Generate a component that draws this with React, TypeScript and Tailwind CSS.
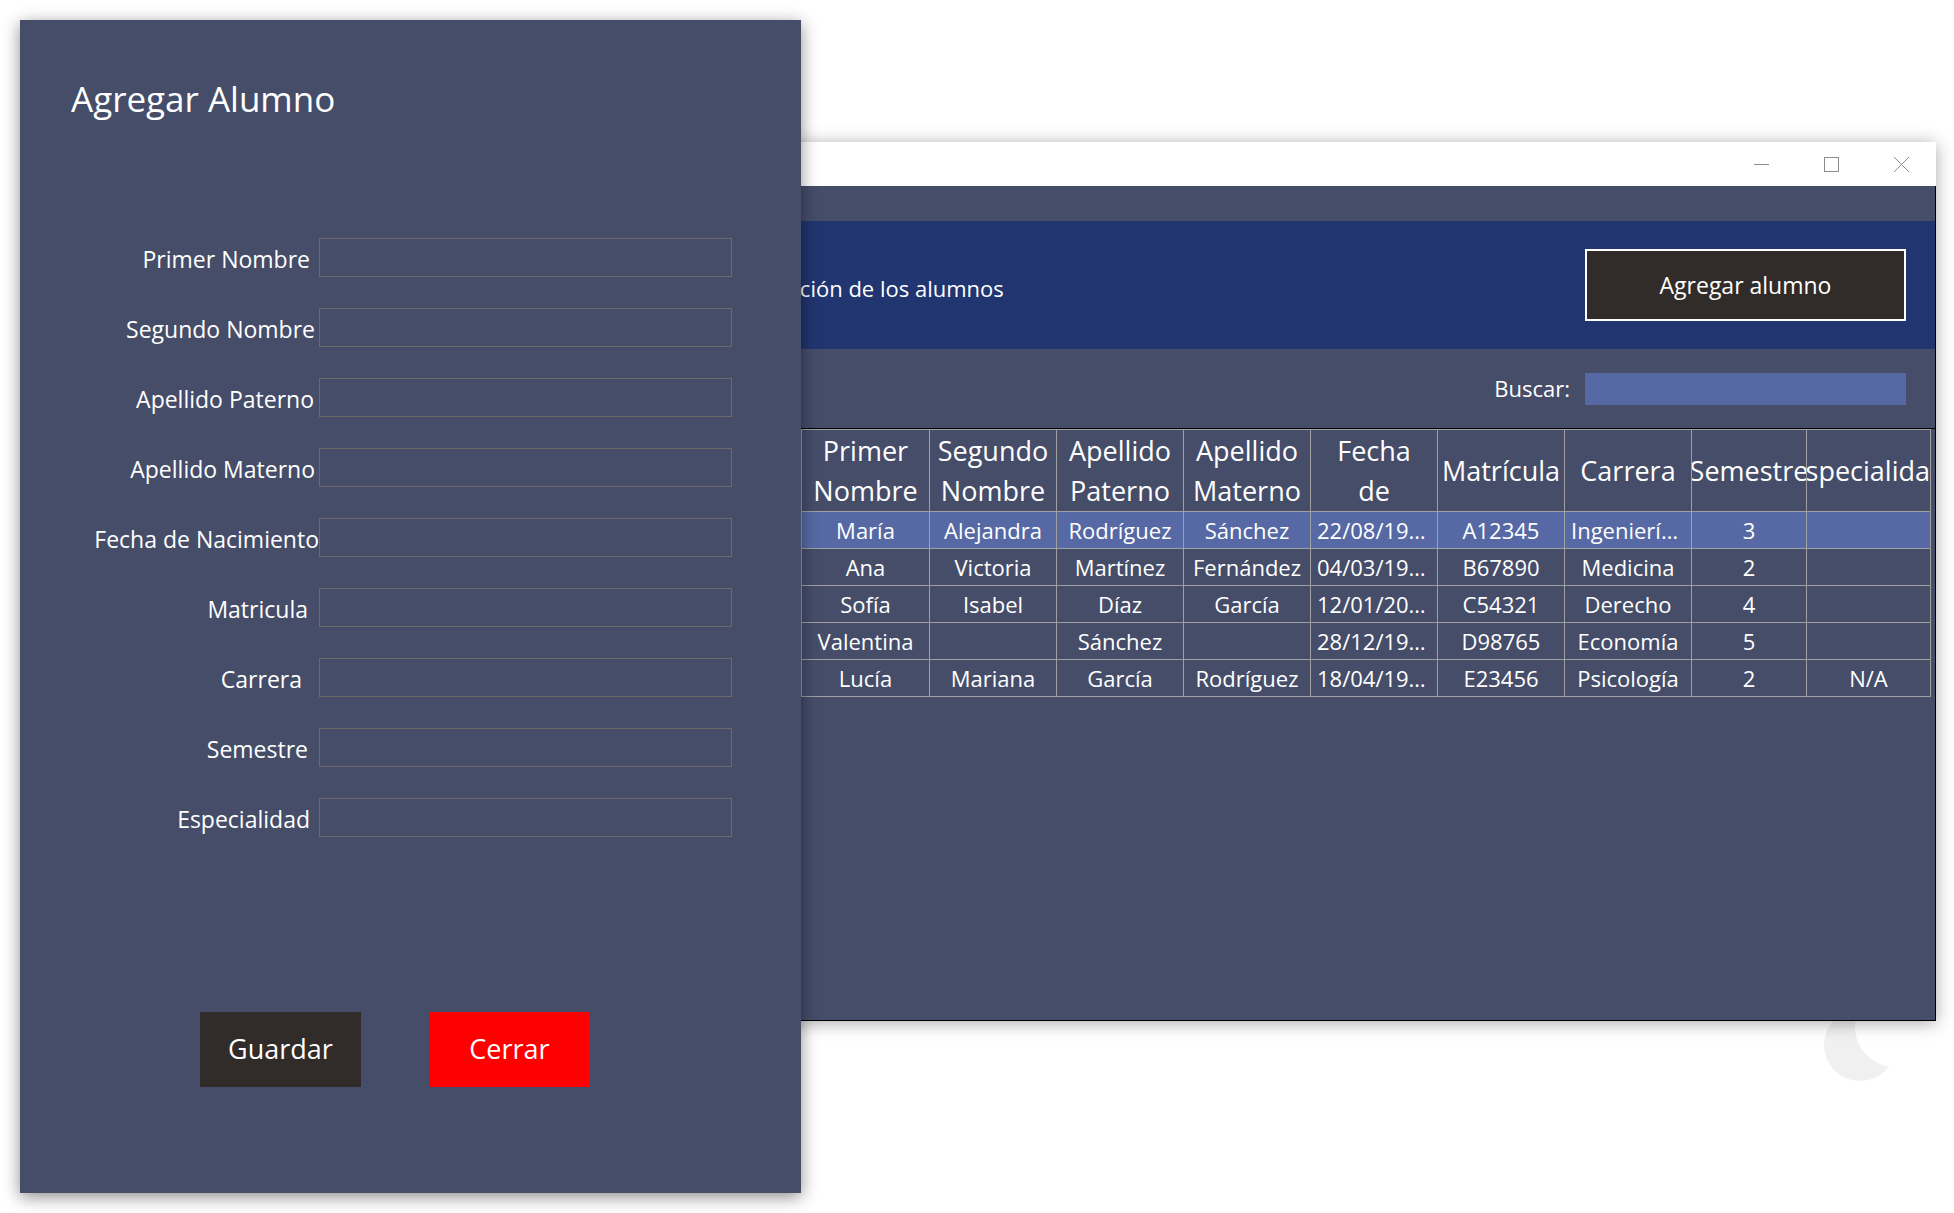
import React from "react";

const fields = [
  { label: "Primer Nombre", pr: "pr-[9px]" },
  { label: "Segundo Nombre", pr: "pr-[4px]" },
  { label: "Apellido Paterno", pr: "pr-[5px]" },
  { label: "Apellido Materno", pr: "pr-[4px]" },
  { label: "Fecha de Nacimiento", pr: "pr-0" },
  { label: "Matricula", pr: "pr-[11px]" },
  { label: "Carrera", pr: "pr-[17px]" },
  { label: "Semestre", pr: "pr-[11px]" },
  { label: "Especialidad", pr: "pr-[9px]" },
];

const alumnos = [
  ["María", "Alejandra", "Rodríguez", "Sánchez", "22/08/1999", "A12345", "Ingeniería en Sistemas", "3", ""],
  ["Ana", "Victoria", "Martínez", "Fernández", "04/03/1998", "B67890", "Medicina", "2", ""],
  ["Sofía", "Isabel", "Díaz", "García", "12/01/2000", "C54321", "Derecho", "4", ""],
  ["Valentina", "", "Sánchez", "", "28/12/1997", "D98765", "Economía", "5", ""],
  ["Lucía", "Mariana", "García", "Rodríguez", "18/04/1999", "E23456", "Psicología", "2", "N/A"],
];

const headers = [
  "Primer Nombre",
  "Segundo Nombre",
  "Apellido Paterno",
  "Apellido Materno",
  "Fecha de Nacimiento",
  "Matrícula",
  "Carrera",
  "Semestre",
  "Especialidad",
];

const CaptionButtons = () => (
  <div className="flex h-full">
    <div className="flex w-[70px] items-center justify-center">
      <svg width="15" height="15" viewBox="0 0 15 15">
        <line x1="0" y1="7.5" x2="15" y2="7.5" stroke="#8c8c8c" strokeWidth="1" />
      </svg>
    </div>
    <div className="flex w-[70px] items-center justify-center">
      <svg width="15" height="15" viewBox="0 0 15 15">
        <rect x="0.5" y="0.5" width="14" height="14" fill="none" stroke="#8c8c8c" strokeWidth="1" />
      </svg>
    </div>
    <div className="flex w-[70px] items-center justify-center">
      <svg width="15" height="15" viewBox="0 0 15 15">
        <path d="M0 0 L15 15 M15 0 L0 15" stroke="#8c8c8c" strokeWidth="1" />
      </svg>
    </div>
  </div>
);

const AlumnosTable = () => (
  <div className="ml-[101px] mt-[23px] border-t border-black">
    <div className="grid w-fit grid-cols-[128px_127px_127px_127px_127px_127px_127px_115px_124px] border-l border-t border-[#a0a0a0]">
      {headers.map((h) =>
        h === "Fecha de Nacimiento" ? (
          <div
            key={h}
            className="flex h-[82px] items-start justify-center overflow-hidden border-b border-r border-[#a0a0a0] pt-[1px] text-[27px] leading-[40px]"
          >
            <span className="text-center">
              Fecha
              <br />
              de
              <br />
              Nacimiento
            </span>
          </div>
        ) : (
          <div
            key={h}
            className="flex h-[82px] items-center justify-center overflow-hidden border-b border-r border-[#a0a0a0] text-[27px] leading-[40px]"
          >
            <span className="text-center">{h}</span>
          </div>
        )
      )}
      {alumnos.map((row, i) =>
        row.map((cell, j) => (
          <div
            key={i + "-" + j}
            className={
              i === 0
                ? "h-[37px] truncate border-b border-r border-[#a0a0a0] bg-[#5669a5] px-[6px] text-center text-[22px] leading-[36px]"
                : "h-[37px] truncate border-b border-r border-[#a0a0a0] px-[6px] text-center text-[22px] leading-[36px]"
            }
          >
            {cell}
          </div>
        ))
      )}
    </div>
  </div>
);

const MainWindow = () => (
  <div className="absolute left-[700px] top-[142px] flex w-[1236px] flex-col shadow-[0_2px_16px_rgba(0,0,0,0.35)]">
    <div className="flex h-[44px] justify-end bg-white">
      <CaptionButtons />
    </div>
    <div className="flex h-[835px] flex-col border-b border-r border-black bg-[#454d69]">
      <div className="mt-[35px] flex h-[128px] items-center justify-between bg-[#213570] pl-[18px] pr-[29px]">
        <span className="pt-[6px] text-[22px]">Información de los alumnos</span>
        <button className="flex h-[72px] w-[321px] items-center justify-center border-2 border-white bg-[#312c29] text-[23px]">
          Agregar alumno
        </button>
      </div>
      <div className="mt-[23px] flex items-center justify-end pr-[29px]">
        <span className="mr-[15px] text-[22px]">Buscar:</span>
        <div className="h-[32px] w-[321px] bg-[#5669a5]" />
      </div>
      <AlumnosTable />
    </div>
  </div>
);

const AddDialog = () => (
  <div className="absolute left-[20px] top-[20px] flex h-[1173px] w-[781px] flex-col bg-[#454d69] shadow-[0_4px_16px_rgba(0,0,0,0.45)]">
    <h1 className="ml-[51px] mt-[56px] text-[35px] leading-[46px]">Agregar Alumno</h1>
    <div className="mt-[116px] flex flex-col gap-[31px]">
      {fields.map((f) => (
        <div key={f.label} className="flex h-[39px] items-center">
          <label className={"w-[299px] shrink-0 whitespace-nowrap pt-[3px] text-right text-[23px] " + f.pr}>
            {f.label}
          </label>
          <div className="h-full w-[413px] border border-[#6b6a66]" />
        </div>
      ))}
    </div>
    <div className="ml-[180px] mt-[175px] flex gap-[68px]">
      <button className="h-[75px] w-[161px] bg-[#312c29] text-[27px]">Guardar</button>
      <button className="h-[75px] w-[161px] bg-[#ff0000] text-[27px]">Cerrar</button>
    </div>
  </div>
);

export default function App() {
  return (
    <div className="relative h-[1213px] w-[1954px] overflow-hidden bg-white font-['Open_Sans',sans-serif] text-white">
      <svg className="absolute left-[1815px] top-[1005px]" width="120" height="90" viewBox="0 0 120 90">
        <circle cx="45" cy="40" r="36" fill="#f0f0f0" />
        <circle cx="80" cy="22" r="40" fill="#ffffff" />
      </svg>
      <MainWindow />
      <AddDialog />
    </div>
  );
}
